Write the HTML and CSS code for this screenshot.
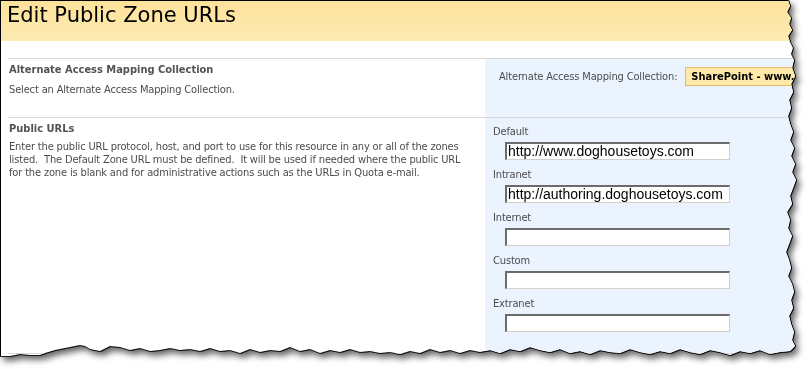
FILE: index.html
```html
<!DOCTYPE html>
<html>
<head>
<meta charset="utf-8">
<link rel="stylesheet" href="styles.css">
</head>
<body>
<div class="frame">
  <div class="sheet">
    <div class="titlebar">
      <h1 class="title">Edit Public Zone URLs</h1>
    </div>
    <div class="sections">
      <div class="section s1">
        <div class="sec-desc">
          <h3 class="sec-head">Alternate Access Mapping Collection</h3>
          <div class="sec-text t1">Select an Alternate Access Mapping Collection.</div>
        </div>
        <div class="sec-ctrl ctrl-aam">
          <span class="aam-label">Alternate Access Mapping Collection:</span>
          <span class="aam-select">SharePoint - www.doghousetoys.com</span>
        </div>
      </div>
      <div class="section s2">
        <div class="sec-desc">
          <h3 class="sec-head">Public URLs</h3>
          <div class="sec-text t2">Enter the public URL protocol, host, and port to use for this resource in any or all of the zones listed.&nbsp; The Default Zone URL must be defined.&nbsp; It will be used if needed where the public URL for the zone is blank and for administrative actions such as the URLs in Quota e-mail.</div>
        </div>
        <div class="sec-ctrl ctrl-urls">
          <div class="field">
            <div class="field-label">Default</div>
            <div class="field-input">http://www.doghousetoys.com</div>
          </div>
          <div class="field">
            <div class="field-label">Intranet</div>
            <div class="field-input">http://authoring.doghousetoys.com</div>
          </div>
          <div class="field">
            <div class="field-label">Internet</div>
            <div class="field-input"></div>
          </div>
          <div class="field">
            <div class="field-label">Custom</div>
            <div class="field-input"></div>
          </div>
          <div class="field">
            <div class="field-label">Extranet</div>
            <div class="field-input"></div>
          </div>
        </div>
      </div>
      <div class="section s3">
        <div class="sec-desc"></div>
        <div class="sec-ctrl"></div>
      </div>
    </div>
  </div>
</div>
</body>
</html>
```
FILE: styles.css
```css
html, body {
  margin: 0;
  padding: 0;
  background: #fff;
}

.frame {
  width: 808px;
  height: 369px;
  filter: drop-shadow(1px 0 0 rgba(0,0,0,0.8)) drop-shadow(0 1px 0 rgba(0,0,0,0.8)) drop-shadow(3px 4px 3px rgba(0,0,0,0.6));
}

.sheet {
  width: 808px;
  height: 369px;
  box-sizing: border-box;
  border-left: 1px solid #000;
  border-top: 1px solid #000;
  background: #fff;
  overflow: hidden;
  clip-path: polygon(0px 0px, 788px 0px, 790px 6px, 787px 12px, 791px 18px, 789px 24px, 792px 30px, 788px 36px, 790px 42px, 793px 48px, 791px 54px, 794px 60px, 792px 68px, 795px 76px, 791px 84px, 793px 92px, 789px 100px, 791px 108px, 788px 116px, 790px 124px, 793px 132px, 790px 140px, 794px 148px, 791px 156px, 795px 164px, 792px 172px, 796px 180px, 793px 188px, 790px 196px, 792px 204px, 787px 212px, 790px 220px, 788px 228px, 792px 236px, 789px 244px, 786px 252px, 789px 260px, 791px 268px, 788px 276px, 792px 284px, 794px 292px, 791px 300px, 793px 308px, 789px 316px, 791px 324px, 794px 332px, 792px 340px, 795px 346px, 790px 351px, 780px 352px, 770px 354px, 760px 350px, 750px 353px, 740px 351px, 730px 355px, 720px 352px, 710px 350px, 700px 354px, 690px 352px, 680px 349px, 670px 353px, 660px 351px, 650px 354px, 640px 352px, 630px 349px, 620px 353px, 610px 352px, 600px 350px, 590px 354px, 580px 351px, 570px 353px, 560px 349px, 550px 352px, 540px 350px, 530px 347px, 520px 351px, 510px 349px, 500px 353px, 490px 350px, 480px 352px, 470px 350px, 460px 353px, 450px 350px, 440px 352px, 430px 349px, 420px 353px, 410px 351px, 400px 354px, 390px 352px, 380px 353px, 370px 351px, 360px 352px, 350px 349px, 340px 352px, 330px 350px, 320px 353px, 310px 349px, 300px 351px, 290px 347px, 280px 351px, 270px 350px, 260px 352px, 250px 349px, 240px 353px, 230px 350px, 220px 351px, 210px 348px, 200px 351px, 190px 349px, 180px 350px, 170px 348px, 160px 350px, 150px 351px, 140px 348px, 130px 350px, 120px 347px, 110px 346px, 100px 351px, 90px 349px, 85px 346px, 80px 345px, 70px 347px, 60px 349px, 55px 350px, 45px 353px, 40px 355px, 30px 355px, 20px 354px, 10px 356px, 0px 356px);
}

.titlebar {
  height: 40px;
  box-sizing: border-box;
  padding: 2px 0 0 6px;
  background: linear-gradient(#fde29a, #feebb2);
}

.title {
  margin: 0;
  font-family: "DejaVu Sans", sans-serif;
  font-weight: 400;
  font-size: 21px;
  line-height: 25px;
  color: #000;
}

.sections {
  margin: 17px 0 0 7px;
  font-family: "DejaVu Sans Condensed", "DejaVu Sans", sans-serif;
  font-size: 11px;
  line-height: 13px;
  color: #4c4c4c;
}

.section {
  display: grid;
  grid-template-columns: 477px 1fr;
  border-top: 1px solid #d8d8d8;
  box-sizing: border-box;
}

.s1 { height: 59px; }
.s2 { height: 236px; }
.s3 { height: 20px; }

.sec-desc {
  padding: 4px 0 0 1px;
}

.sec-head {
  margin: 0;
  font-size: 11px;
  line-height: 14px;
  font-weight: 700;
  color: #525252;
}

.sec-text {
  letter-spacing: -0.15px;
}

.sec-text.t1 { margin-top: 6px; }
.sec-text.t2 { margin-top: 4px; padding-right: 10px; }

.sec-ctrl {
  background: #ebf3ff;
}

.ctrl-aam {
  display: flex;
  align-items: flex-start;
  gap: 8px;
  padding: 8px 0 0 14px;
  white-space: nowrap;
}

.aam-label {
  line-height: 19px;
  letter-spacing: -0.15px;
}

.aam-select {
  height: 19px;
  box-sizing: border-box;
  border: 1px solid #e0b969;
  background: #fee9a8;
  padding: 0 5px;
  font-weight: 700;
  color: #000;
  line-height: 17px;
}

.ctrl-urls {
  padding: 7px 0 0 8px;
}

.field + .field {
  margin-top: 8px;
}

.field-label {
  line-height: 14px;
  letter-spacing: -0.15px;
}

.field-input {
  margin: 3px 0 0 12px;
  width: 225px;
  height: 18px;
  box-sizing: border-box;
  border-top: 2px solid #6b6b6b;
  border-left: 2px solid #6b6b6b;
  border-right: 1px solid #d4d0c8;
  border-bottom: 1px solid #d4d0c8;
  background: #fff;
  padding-left: 1px;
  font-family: "Liberation Sans", Arial, sans-serif;
  font-size: 14px;
  line-height: 15px;
  color: #000;
  white-space: nowrap;
  overflow: hidden;
}
```
